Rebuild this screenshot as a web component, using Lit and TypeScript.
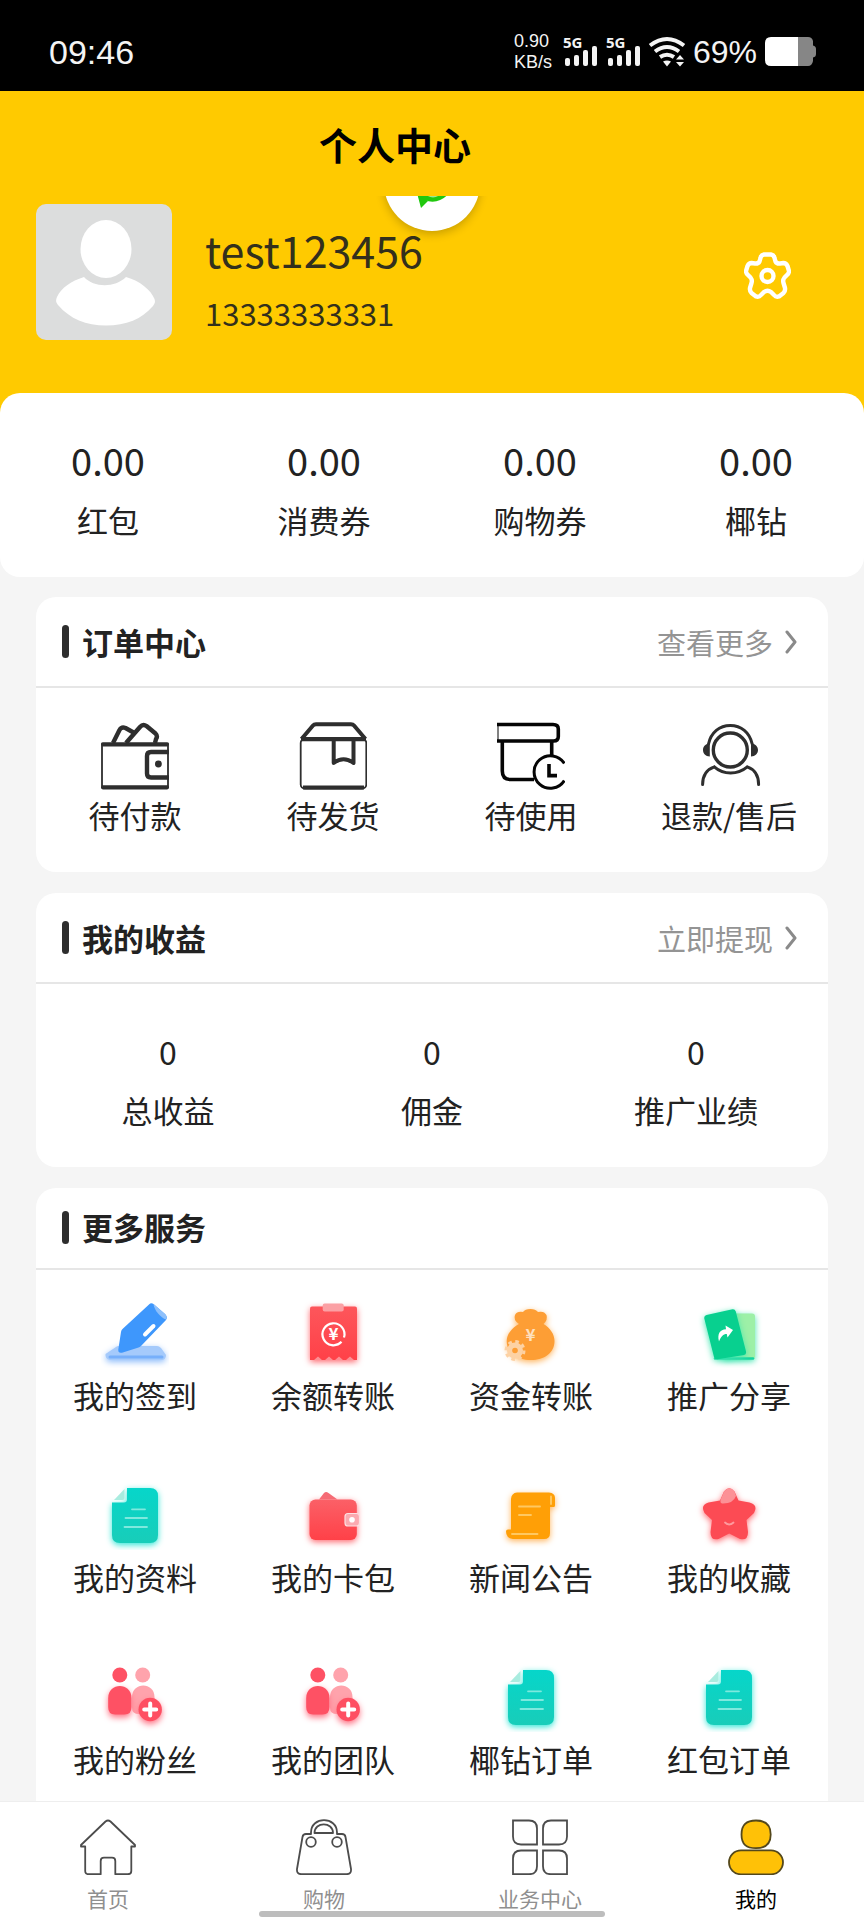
import { LitElement, html, svg, css, nothing, type SVGTemplateResult } from "lit";
import { customElement, property, state } from "lit/decorators.js";
import { classMap } from "lit/directives/class-map.js";

interface Entry {
  label: string;
  icon: SVGTemplateResult;
}

/* ---------- order icons, 68 x 68 ---------- */

const walletOutline = svg`
  <g fill="none" stroke="#2e2e2e" stroke-width="4.400" stroke-linejoin="round">
    <path d="M12 21 18.500 8Q20.500 4.500 24.500 6L32.500 10.500"/>
    <path d="M25 21 39 5Q42 1.500 45.500 4L54.500 11.500Q57 14 55 17L54 21"/>
    <path d="M68 30H50Q46 30 46 34V51.500Q46 55.500 50 55.500H68"/>
  </g>
  <rect x="1" y="22" width="66" height="43.500" rx="2" fill="none" stroke="#2e2e2e" stroke-width="1.800"/>
  <path d="M2 22.300H66M2 65.300H66" stroke="#2e2e2e" stroke-width="4.200" stroke-linecap="round"/>
  <circle cx="57.400" cy="42" r="3.400" fill="#2e2e2e"/>`;

const parcel = svg`
  <g fill="none" stroke="#2e2e2e" stroke-width="4" stroke-linejoin="round">
    <path d="M2.500 17 14 3.500Q15 2.300 17 2.300H52Q54 2.300 55 3.500L66.500 17"/>
    <path d="M2 17.200H67M4 65.500H65" stroke-width="4.200"/>
    <path d="M34.700 17V41Q44.500 33.500 54.500 41V17"/>
  </g>
  <rect x="1.700" y="17" width="65.600" height="49.500" rx="4" fill="none" stroke="#2e2e2e" stroke-width="1.800"/>`;

const parcelClock = svg`
  <g fill="none" stroke="#050505" stroke-width="3.600">
    <path d="M0 2.500H56Q61.300 2.500 61.300 7V14.500Q61.300 19 56.500 19H0"/>
    <path d="M1 3V19" stroke-width="1"/>
    <path d="M5.300 19V49Q5.300 57.500 13.500 57.500H37M54.700 19V34"/>
    <path d="M67.300 41.500A16.300 16.300 0 1 0 67.300 58.500" stroke-width="3"/>
    <path d="M52 42V53.600H60"/>
  </g>`;

const headset = svg`
  <g fill="none" stroke="#2e2e2e" stroke-width="3" stroke-linecap="round">
    <circle cx="35.300" cy="28" r="17" stroke-width="3.400"/>
    <path d="M13.500 22C16 10.500 24.500 3.500 35.300 3.500S54.600 10.500 57.200 22"/>
    <path d="M7.600 62.500C7.600 54 11.500 47.500 19.300 44.800 28.500 53 42.500 53 52.300 44.800 60 47.500 63.600 54 63.600 62.500"/>
  </g>
  <path d="M14.800 21V34.500C10.500 34.300 8 31.500 8 28S10.500 22 14.800 21ZM56 21V34.500C60.300 34.300 63 31.500 63 28S60.300 22 56 21Z" fill="#2e2e2e"/>`;

/* ---------- service icons, 68 x 68 ---------- */

const pencil = svg`
  <path class="glow-blue" d="M15 47Q16 46 18 46H56Q58 46 60 48L65 55Q65 60 60 60H9Q4 59 4.500 54Z" fill="#a5cafb"/>
  <path d="M9 57H61" stroke="#77affa" stroke-width="3" stroke-linecap="round"/>
  <path d="M48 4.500Q50 2.500 52.500 4L64 14Q67 17 65 20L40 46Q38.500 47.500 36 48L21 52.700Q17 53.500 17.300 49.500L20 32Q20.300 30 21.500 29Z" fill="#3e97fc"/>
  <path d="M52.500 4 64 14Q66.500 16.500 65 19.500C60 18 53 10 52.500 4Z" fill="#8ec0fb"/>
  <path d="M44 34.500 52.500 26" stroke="#fff" stroke-width="4" stroke-linecap="round"/>`;

const bill = svg`
  <defs><linearGradient id="red" x1="0" y1="0" x2="0" y2="1"><stop offset="0" stop-color="#fd565b"/><stop offset="1" stop-color="#ff4148"/></linearGradient></defs>
  <path class="glow-red" d="M13 6.500H56Q58 6.500 58 8.500V60H11V8.500Q11 6.500 13 6.500Z" fill="url(#red)"/>
  <path d="M15 60 19 56.500 23 60ZM26 60 30 56.500 34 60ZM36 60 40 56.500 44 60ZM47 60 51 56.500 55 60Z" fill="#fd8f94"/>
  <rect x="23.700" y="3.500" width="21" height="8" rx="2" fill="#fba0a4"/>
  <path d="M42.500 41.800A11 11 0 1 1 45 37.500" fill="none" stroke="#fff" stroke-width="2.200"/>
  <text class="yen" x="34.400" y="40" font-size="17" fill="#fff" text-anchor="middle">¥</text>`;

const moneyBag = svg`
  <path class="glow-orange" d="M22 24Q16 20 18 15 20 11 26 12 28 9 33.500 9 38.500 9 41 12 47 10.500 49.500 15 51 20 46.500 24C53 28 57.500 34 57.500 41 57.500 53 47 60 34 60 20 60 9.700 53 9.700 41 9.700 34 15 28 22 24Z" fill="#fd9e35"/>
  <g fill="#fdd2a4">
    <circle cx="18" cy="50.500" r="8"/>
    <circle cx="18" cy="50.500" r="9" fill="none" stroke="#fdd2a4" stroke-width="3" stroke-dasharray="3.600 3.470"/>
  </g>
  <circle cx="18" cy="50.500" r="2.800" fill="#fd9e35"/>
  <text class="yen" x="33.400" y="41" font-size="17" fill="#fee0be" text-anchor="middle">¥</text>`;

const shareCards = svg`
  <rect class="glow-green" x="27" y="13.500" width="33" height="46" rx="3" fill="#9df0a7"/>
  <path d="M20 58.500H58" stroke="#14d5a0" stroke-width="2.500" stroke-linecap="round"/>
  <path class="glow-green" d="M11.500 15 37.500 9.300Q40 9 40.800 11.500L51 51.500Q51.500 54.500 49 55L22.500 59.300Q19.500 59.500 19 57L9.300 18.500Q8.800 15.800 11.500 15Z" fill="#08d08f"/>
  <path d="M24 41.500C22 34 25 29.500 31 29.300L30.500 25.500 38 30 32.500 37.500 31.800 34C28 34 26 36.500 24 41.500Z" fill="#fff"/>`;

const document_ = svg`
  <defs><linearGradient id="teal" x1="0" y1="0" x2="0" y2="1"><stop offset="0" stop-color="#06d6ca"/><stop offset="1" stop-color="#18cdb9"/></linearGradient></defs>
  <path class="glow-teal" d="M26 6H49Q57 6 57 14V53Q57 61 49 61H19Q11 61 11 53V20.500H23Q26 20.500 26 17.500Z" fill="url(#teal)"/>
  <path d="M13 18 23.500 7V16Q23.500 18 21.500 18Z" fill="#a9ecdf"/>
  <path d="M31 27.300H44M24.500 36H46M23.500 45H46" stroke="#7ee9de" stroke-width="1.800" stroke-linecap="round"/>`;

const wallet = svg`
  <defs><linearGradient id="red-b" x1="0" y1="0" x2="0" y2="1"><stop offset="0" stop-color="#fb6067"/><stop offset="1" stop-color="#ff4148"/></linearGradient></defs>
  <path d="M20 17.500 25 11Q27 9 29.500 11L38.500 17.500Z" fill="#f56c76"/>
  <rect class="glow-red" x="10.500" y="17.500" width="47.300" height="40.500" rx="6" fill="url(#red-b)"/>
  <rect x="46" y="31.500" width="14.500" height="12.500" rx="3" fill="#fbaab0" stroke="#fde0e2" stroke-width="1.200"/>
  <circle cx="53" cy="37.800" r="2.800" fill="#fff"/>`;

const scroll = svg`
  <path class="glow-orange" d="M20 10.500H52Q58 11 58 16V23.500Q58 25 56.500 25H53V51Q53 57 47 57H16Q9 56 9 49.500 9 47.500 11 47.500H14V17Q14.500 11 20 10.500Z" fill="#ff9f06"/>
  <path d="M22 24.500H43M22 33H34M15 52H40.500M54 14.500V22" stroke="#ffc861" stroke-width="1.900" stroke-linecap="round"/>`;

const star = svg`
  <path class="glow-red" d="M29 9.500Q34.200 3 39.500 9.500L43.500 18.500 54.500 20.500Q63.500 23 59 31L51.500 38 53 50Q53 59 45 57L34.200 51.500 23.500 57Q15.500 59 15.500 50L17 38 9.500 31Q5 23 13.500 20.500L25 18.500Z" fill="#fc4b54"/>
  <path d="M29 9.500Q34.200 3 39.500 9.500L41 14Q38 22 27 21.500 25 21 25.500 18Z" fill="#fc9196"/>
  <path d="M30 40.500Q34.200 44.500 38.500 40.500" fill="none" stroke="#fd9a9e" stroke-width="1.800" stroke-linecap="round"/>`;

const people = svg`
  <circle cx="41.700" cy="11" r="7.500" fill="#ffa3ac"/>
  <path d="M31 33C31 17.500 53.500 17.500 53.500 33V44Q53 50 47 50H38Q31 50 31 44Z" fill="#ffa3ac"/>
  <circle cx="18.800" cy="11" r="7.500" fill="#fe5164"/>
  <path class="glow-pink" d="M7.200 34C7.200 18 30.500 18 30.500 34V43Q30.500 50.500 23.500 50.500H14Q7.200 50.500 7.200 43Z" fill="#fe5164"/>
  <circle class="glow-pink" cx="49.200" cy="45.500" r="11.700" fill="#fe4f62"/>
  <path d="M49.200 39.500V51.500M43.200 45.500H55.200" stroke="#fff" stroke-width="4" stroke-linecap="round"/>`;

/* ---------- tab icons, 56 x 56 ---------- */

const home = svg`
  <path d="M25.500 2.500Q28 .500 30.500 2.500L55 26V27.500H51.300V52Q51.300 55.200 48 55.200H35.300V42Q35.300 38.700 32 38.700H24Q20.700 38.700 20.700 42V55.200H8.500Q5.200 55.200 5.200 52V27.500H1V26Z" fill="none" stroke="#4c4c4c" stroke-width="1.800" stroke-linejoin="round"/>`;

const bag = svg`
  <g fill="none" stroke="#4c4c4c" stroke-width="1.800" stroke-linejoin="round">
    <path d="M15 15V13.500C15 -3 41 -3 41 13.500V15H46Q49 15 49.500 18L55 50Q55.500 55.200 50.500 55.200H5.500Q.500 55.200 1 50L6.500 18Q7 15 10 15Z"/>
    <path d="M18.500 14C18.500 2.500 37 2.500 37 14Z"/>
    <circle cx="15" cy="23" r="4.800"/><circle cx="41" cy="23" r="4.800"/>
  </g>`;

const petals = svg`
  <g fill="none" stroke="#4c4c4c" stroke-width="1.800">
    <path d="M1 1.500H17Q25 1.500 25 9.500V25.500H9Q1 25.500 1 17.500Z"/>
    <path d="M55 1.500H39Q31 1.500 31 9.500V25.500H47Q55 25.500 55 17.500Z"/>
    <path d="M1 55.200V39.500Q1 31.500 9 31.500H25V47.200Q25 55.200 17 55.200Z"/>
    <path d="M31 31.500H47Q55 31.500 55 39.500V55.200H39Q31 55.200 31 47.200Z"/>
  </g>`;

const person = svg`
  <g fill="#ffc107" stroke="#54481c" stroke-width="1.800">
    <path d="M13.500 15.500C13.500 5.500 18.500 1.500 28 1.500S42.700 5.500 42.700 15.500 37.500 29.200 28 29.200 13.500 25.500 13.500 15.500Z"/>
    <rect x="1" y="31.300" width="54" height="24" rx="12"/>
  </g>`;

/* ---------- shared elements ---------- */

@customElement("glyph-icon")
class GlyphIcon extends LitElement {
  @property({ attribute: false }) art: SVGTemplateResult | typeof nothing = nothing;
  @property({ type: Number }) size = 68;

  static styles = css`
    :host { display: block; }
    svg { display: block; overflow: hidden; }
    .glow-blue { filter: drop-shadow(0 2px 3px #8fbdfb); }
    .glow-red { filter: drop-shadow(0 2px 3px #ff6970); }
    .glow-orange { filter: drop-shadow(0 2px 3px #ffb45c); }
    .glow-green { filter: drop-shadow(0 2px 3px #3fe6b0); }
    .glow-teal { filter: drop-shadow(0 2px 3px #2fe6d6); }
    .glow-pink { filter: drop-shadow(0 3px 3px #ff7486); }
    .yen { font-family: "Noto Sans CJK SC", sans-serif; font-weight: 700; }
  `;

  render() {
    return html`<svg width=${this.size} height=${this.size} viewBox="0 0 ${this.size} ${this.size}" aria-hidden="true">${this.art}</svg>`;
  }
}

@customElement("section-card")
class SectionCard extends LitElement {
  @property() heading = "";
  @property() action = "";

  static styles = css`
    :host { display: block; background: #fff; border-radius: 20px; }
    :host([open-ended]) { border-radius: 20px 20px 0 0; }
    .head {
      box-sizing: border-box;
      min-height: 91px;
      padding: 0 31px 0 26px;
      border-bottom: 2px solid #e6e6e6;
      display: flex;
      align-items: center;
      gap: 13px;
    }
    .short { min-height: 82px; padding-bottom: 2px; }
    .bar { width: 7px; height: 33px; border-radius: 4px; background: #2e2e2e; }
    h2 { margin: 0; flex: 1; font-size: 31px; line-height: 44px; font-weight: 700; color: #222; }
    a { display: flex; align-items: center; gap: 12px; font-size: 29px; line-height: 44px; color: #949494; text-decoration: none; }
  `;

  render() {
    return html`
      <header class=${classMap({ head: true, short: !this.action })}>
        <span class="bar"></span>
        <h2>${this.heading}</h2>
        ${this.action
          ? html`<a href="#">${this.action}
              <svg width="12" height="24" viewBox="0 0 12 24" fill="none" stroke="#8a8a8a" stroke-width="3" stroke-linecap="round" stroke-linejoin="round" aria-hidden="true"><path d="M2 2 10 12 2 22"/></svg></a>`
          : nothing}
      </header>
      <slot></slot>`;
  }
}

@customElement("app-root")
class AppRoot extends LitElement {
  @state() private activeTab = "我的";

  private balances = [
    ["0.00", "红包"],
    ["0.00", "消费券"],
    ["0.00", "购物券"],
    ["0.00", "椰钻"],
  ];

  private orders: Entry[] = [
    { label: "待付款", icon: walletOutline },
    { label: "待发货", icon: parcel },
    { label: "待使用", icon: parcelClock },
    { label: "退款/售后", icon: headset },
  ];

  private earnings = [
    ["0", "总收益"],
    ["0", "佣金"],
    ["0", "推广业绩"],
  ];

  private services: Entry[] = [
    { label: "我的签到", icon: pencil },
    { label: "余额转账", icon: bill },
    { label: "资金转账", icon: moneyBag },
    { label: "推广分享", icon: shareCards },
    { label: "我的资料", icon: document_ },
    { label: "我的卡包", icon: wallet },
    { label: "新闻公告", icon: scroll },
    { label: "我的收藏", icon: star },
    { label: "我的粉丝", icon: people },
    { label: "我的团队", icon: people },
    { label: "椰钻订单", icon: document_ },
    { label: "红包订单", icon: document_ },
  ];

  private tabs: Entry[] = [
    { label: "首页", icon: home },
    { label: "购物", icon: bag },
    { label: "业务中心", icon: petals },
    { label: "我的", icon: person },
  ];

  static styles = css`
    :host {
      display: flex;
      flex-direction: column;
      min-height: 100vh;
      background: #f5f5f5;
      color: #222;
      font-family: "Noto Sans CJK SC", sans-serif;
    }
    .status {
      box-sizing: border-box;
      min-height: 91px;
      padding: 12px 48px 0 49px;
      display: flex;
      align-items: center;
      gap: 8px;
      background: #000;
      color: #f4f4f4;
      font-family: "Liberation Sans", sans-serif;
    }
    .status svg { display: block; flex: none; overflow: visible; }
    .clock { flex: 1; font-size: 34px; line-height: 40px; }
    .speed { margin-right: 3px; font-size: 18px; line-height: 21px; }
    .percent { font-size: 32px; line-height: 40px; }
    .net { font-family: "Open Sans", sans-serif; font-weight: 700; font-size: 15px; }
    .titlebar {
      min-height: 105px;
      padding-right: 74px;
      display: flex;
      align-items: center;
      justify-content: center;
      background: #ffca00;
    }
    h1 { margin: 0; font-size: 38px; line-height: 56px; font-weight: 700; color: #000; }
    .profile {
      position: relative;
      overflow: hidden;
      display: flex;
      gap: 33px;
      padding: 8px 73px 77px 36px;
      background: #ffca00;
    }
    .avatar { flex: none; display: block; }
    .details { flex: 1; display: flex; align-items: center; justify-content: space-between; padding-top: 8px; }
    .name { margin: 0 0 12px; font-size: 43px; line-height: 62px; color: #33301c; }
    .phone { margin: 0; font-size: 31px; line-height: 42px; color: #33301c; }
    .settings { padding: 0; border: 0; background: none; cursor: pointer; }
    .settings svg { display: block; }
    .float {
      position: absolute;
      top: -61px;
      left: calc(50% - 48px);
      border-radius: 50%;
      background: #fff;
      box-shadow: 0 3px 10px #00000038;
    }
    .row { display: grid; grid-auto-flow: column; grid-auto-columns: 1fr; text-align: center; }
    .balances {
      position: relative;
      margin-top: -24px;
      padding: 43px 0 35px;
      border-radius: 20px;
      background: #fff;
    }
    .figure { display: grid; gap: 14px; margin: 0; }
    .figure dt { grid-row: 2; font-size: 31px; line-height: 44px; }
    .figure dd { margin: 0; font-size: 38px; line-height: 48px; }
    .earnings { padding: 45px 0 35px; }
    .earnings .figure dd { font-size: 32px; line-height: 45px; }
    .cards { flex: 1; display: flex; flex-direction: column; gap: 21px; padding: 20px 36px 0; }
    .orders { padding: 34px 0 35px; }
    .services { display: grid; grid-template-columns: repeat(4, 1fr); row-gap: 65px; padding: 30px 0 16px; }
    .more { flex: 1; }
    .entry {
      display: flex;
      flex-direction: column;
      align-items: center;
      gap: 3px;
      font-size: 31px;
      line-height: 44px;
      color: #222;
      text-decoration: none;
      white-space: nowrap;
    }
    .services .entry { gap: 5px; }
    .tabs {
      position: sticky;
      bottom: 0;
      padding: 17px 0 7px;
      border-top: 1px solid #eee;
      background: #fff;
    }
    .tab {
      display: flex;
      flex-direction: column;
      align-items: center;
      gap: 8px;
      padding: 0;
      border: 0;
      background: none;
      font-family: inherit;
      font-size: 21px;
      line-height: 30px;
      color: #8f8f8f;
      cursor: pointer;
    }
    .active { color: #000; }
    .handle {
      position: absolute;
      left: 30%;
      right: 30%;
      bottom: 3px;
      height: 6px;
      border-radius: 3px;
      background: #bdbdbd;
    }
  `;

  private signal() {
    return html`<svg width="35" height="31" viewBox="0 0 35 31" fill="#f4f4f4" aria-hidden="true">
      <text class="net" x="0" y="12">5G</text>
      <rect x="2" y="22" width="5" height="8" rx="2"/>
      <rect x="11" y="19" width="5" height="11" rx="2"/>
      <rect x="20" y="14" width="5" height="16" rx="2"/>
      <rect x="29" y="10" width="5" height="20" rx="2"/>
    </svg>`;
  }

  private figure([value, label]: string[]) {
    return html`<dl class="figure"><dt>${label}</dt><dd>${value}</dd></dl>`;
  }

  private entry(item: Entry) {
    return html`<a class="entry" href="#"><glyph-icon .art=${item.icon}></glyph-icon><span>${item.label}</span></a>`;
  }

  render() {
    return html`
      <div class="status">
        <span class="clock">09:46</span>
        <span class="speed">0.90<br>KB/s</span>
        ${this.signal()} ${this.signal()}
        <svg width="36" height="30" viewBox="0 0 36 30" fill="none" stroke="#f4f4f4" stroke-width="4" aria-hidden="true">
          <path d="M1 8.500Q18 -4.500 35 8.500M6 14.500Q18 5.500 30 14.500M11 20Q18 15.500 25 20"/>
          <path d="M14 24.500Q18 22.500 22 24.500L18 29.500ZM27 22.500 31 18 35 22.500ZM27 25 31 29.500 35 25Z" fill="#f4f4f4" stroke="none"/>
        </svg>
        <span class="percent">69%</span>
        <svg width="51" height="29" viewBox="0 0 51 29" aria-hidden="true">
          <path d="M33 0H43Q47 0 48 4V8.500Q51 9 51 12V17Q51 20 48 20.500V24Q47 29 43 29H33Z" fill="#868686"/>
          <path d="M6 0H33V29H6Q0 29 0 23V6Q0 0 6 0Z" fill="#fff"/>
        </svg>
      </div>

      <header class="titlebar"><h1>个人中心</h1></header>

      <section class="profile">
        <svg class="float" width="96" height="96" viewBox="0 0 96 96" aria-hidden="true">
          <path d="M33 58 37 73 44 66Z" fill="#20c80e"/>
          <ellipse cx="48.500" cy="46" rx="20" ry="20.700" fill="#20c80e"/>
          <ellipse cx="49" cy="56" rx="8" ry="6.500" fill="#9be892"/>
        </svg>
        <svg class="avatar" width="136" height="136" viewBox="0 0 136 136" role="img" aria-label="头像">
          <rect width="136" height="136" rx="10" fill="#dcdddd"/>
          <path d="M48 73C58 84 79 84 90 73 104 77 115 86 118.500 95 119.500 98 119 99 117 102 106 115 90 121.500 70 121.500 50 121.500 34 115 22 101 20 98 19.500 97 21 93 25 84 35 77 48 73Z" fill="#fff"/>
          <ellipse cx="70" cy="45" rx="25.500" ry="29" fill="#fff"/>
        </svg>
        <div class="details">
          <div>
            <p class="name">test123456</p>
            <p class="phone">13333333331</p>
          </div>
          <button class="settings" aria-label="设置">
            <svg width="47" height="48" viewBox="0 0 47 48" fill="none" stroke="#fff" stroke-width="4.400" stroke-linejoin="round" aria-hidden="true">
              <path d="M20 2.500H27Q30 3 30.500 6L31.500 9.500Q33 12 36 11.500L39.500 11Q42 11 43.500 14L45 19Q45 21.500 43 23L40.500 25.500Q38.500 28 39.500 31L41 36Q41.500 39 39.500 41L35 44.500Q32 45.500 30 43L27 40Q23.500 37.500 20 40L17 43Q15 45.500 12 44.500L7.500 41Q5.500 39 6 36L7.500 31Q8.500 28 6.500 25.500L4 23Q2 21.500 2 19L3.500 14Q5 11 7.500 11L11 11.500Q14 12 15.500 9.500L16.500 6Q17 3 20 2.500Z"/>
              <circle cx="23.500" cy="24" r="6"/>
            </svg>
          </button>
        </div>
      </section>

      <section class="row balances">${this.balances.map((b) => this.figure(b))}</section>

      <main class="cards">
        <section-card heading="订单中心" action="查看更多">
          <div class="row orders">${this.orders.map((o) => this.entry(o))}</div>
        </section-card>
        <section-card heading="我的收益" action="立即提现">
          <div class="row earnings">${this.earnings.map((e) => this.figure(e))}</div>
        </section-card>
        <section-card class="more" heading="更多服务" open-ended>
          <div class="services">${this.services.map((s) => this.entry(s))}</div>
        </section-card>
      </main>

      <nav class="row tabs">
        ${this.tabs.map(
          (t) => html`<button
            class=${classMap({ tab: true, active: t.label === this.activeTab })}
            @click=${() => (this.activeTab = t.label)}
          ><glyph-icon .art=${t.icon} .size=${56}></glyph-icon><span>${t.label}</span></button>`
        )}
        <span class="handle"></span>
      </nav>`;
  }
}
